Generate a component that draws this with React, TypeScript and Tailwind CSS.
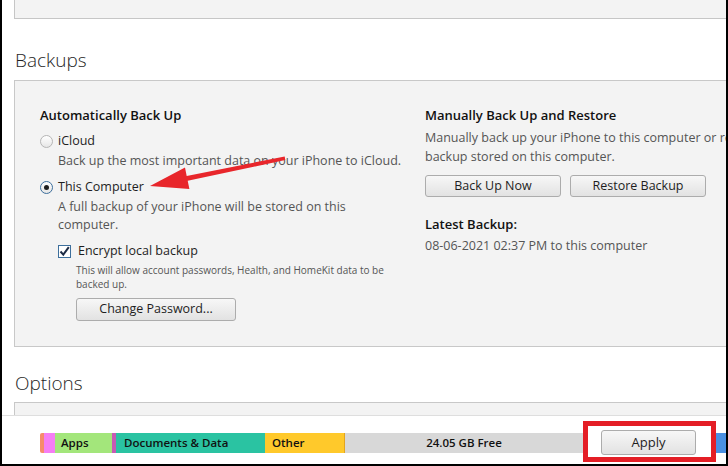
import { FunctionComponent } from "react";

const font = { fontFamily: '"Open Sans", "Noto Sans", sans-serif' };

const Button: FunctionComponent<{ label: string; className: string }> = ({ label, className }) => (
	<div
		className={
			"flex items-center justify-center rounded-[3px] border border-[#acacac] bg-gradient-to-b from-[#f7f7f7] to-[#e2e2e2] text-[12.5px] text-[#1e1e1e] " +
			className
		}
	>
		{label}
	</div>
);

const Radio: FunctionComponent<{ checked?: boolean }> = ({ checked }) => (
	<div
		className={
			"flex h-[13px] w-[13px] items-center justify-center rounded-full border bg-gradient-to-b from-[#ffffff] to-[#e6e6e6] " +
			(checked ? "border-[#3d6f9c]" : "border-[#b5b5b5]")
		}
	>
		{checked ? <div className="h-[5px] w-[5px] rounded-full bg-[#1f1f1f]" /> : null}
	</div>
);

const Checkbox: FunctionComponent = () => (
	<div className="flex h-[13px] w-[13px] items-center justify-center border border-[#3d6f9c] bg-white">
		<svg width="11" height="11" viewBox="0 0 11 11">
			<path d="M1.5 5.5 L4.3 8.6 L9.8 1.2" fill="none" stroke="#1d2b45" strokeWidth="2" />
		</svg>
	</div>
);

const App: FunctionComponent = () => {
	return (
		<div
			className="relative h-[466px] w-[728px] overflow-hidden border-b-2 border-l-2 border-r-2 border-black bg-white"
			style={font}
		>
			<div className="ml-[12px] mr-[-20px] h-[19px] border-b border-l border-[#c6c6c6] bg-[#f3f3f3]" />

			<div className="mt-[29px] pl-[13px] text-[19px] font-light leading-[24px] text-[#1f1f1f]">Backups</div>

			<div className="ml-[12px] mr-[-40px] mt-[8px] flex h-[267px] border-b border-l border-t border-[#c8c8c8] bg-[#f3f3f3]">
				<div className="w-[410px] shrink-0 pl-[25px] pt-[25px] text-[12.5px]">
					<div className="text-[13px] font-semibold leading-[18px] text-[#111]">Automatically Back Up</div>
					<div className="mt-[8px] flex h-[18px] items-center text-[#1e1e1e]">
						<Radio />
						<span className="ml-[5px]">iCloud</span>
					</div>
					<div className="ml-[18px] mt-[2px] leading-[18px] text-[#555]">
						Back up the most important data on your iPhone to iCloud.
					</div>
					<div className="mt-[8px] flex h-[18px] items-center text-[#1e1e1e]">
						<Radio checked />
						<span className="ml-[5px]">This Computer</span>
					</div>
					<div className="ml-[18px] mt-[2px] w-[310px] leading-[18px] text-[#555]">
						A full backup of your iPhone will be stored on this computer.
					</div>
					<div className="ml-[18px] mt-[8px] flex h-[18px] items-center text-[#1e1e1e]">
						<Checkbox />
						<span className="ml-[7px]">Encrypt local backup</span>
					</div>
					<div className="ml-[36px] mt-[3px] w-[320px] text-[10px] leading-[14px] text-[#555]">
						This will allow account passwords, Health, and HomeKit data to be backed up.
					</div>
					<Button label="Change Password..." className="ml-[36px] mt-[7px] h-[23px] w-[160px]" />
				</div>

				<div className="flex-1 whitespace-nowrap pt-[25px] text-[12.5px]">
					<div className="text-[13px] font-semibold leading-[18px] text-[#111]">Manually Back Up and Restore</div>
					<div className="mt-[4px] leading-[19px] text-[#555]">
						<div>Manually back up your iPhone to this computer or restore a</div>
						<div>backup stored on this computer.</div>
					</div>
					<div className="mt-[9px] flex gap-[9px]">
						<Button label="Back Up Now" className="h-[22px] w-[136px]" />
						<Button label="Restore Backup" className="h-[22px] w-[136px]" />
					</div>
					<div className="mt-[18px] text-[13px] font-semibold leading-[18px] text-[#111]">Latest Backup:</div>
					<div className="mt-[4px] leading-[18px] text-[#555]">08-06-2021 02:37 PM to this computer</div>
				</div>
			</div>

			<div className="mt-[24px] pl-[13px] text-[19px] font-light leading-[24px] text-[#1f1f1f]">Options</div>
			<div className="ml-[12px] mr-[-20px] mt-[7px] h-[13px] border-l border-t border-[#c8c8c8] bg-[#f3f3f3]" />

			<div className="flex h-[49px] border-t border-[#dedede] bg-white pl-[38px]">
				<div className="mt-[17px] flex h-[20px] text-[11.5px] font-semibold leading-[20px] text-[#111]">
					<div className="w-[4px] rounded-l-[2px] bg-[#f68b6c]" />
					<div className="w-[11px] bg-[#f57ef4]" />
					<div className="w-[57px] bg-[#a3e67b] pl-[6px]">Apps</div>
					<div className="w-[4px] bg-[#c65ab4]" />
					<div className="w-[149px] bg-[#2ac3a2] pl-[8px]">Documents &amp; Data</div>
					<div className="w-[80px] border-r border-[#e3a51e] bg-[#ffc92b] pl-[7px]">Other</div>
					<div className="w-[238px] bg-[#d8d8d8] text-center">24.05 GB Free</div>
				</div>
				<div className="mt-[5px] h-[41px] w-[133px] shrink-0 border-[5px] border-[#e41e26]">
					<Button label="Apply" className="ml-[13px] mt-[4px] h-[25px] w-[95px] text-[13px]" />
				</div>
				<div className="mt-[17px] h-[20px] w-[20px] shrink-0 bg-[#4a90e2]" />
			</div>

			<svg className="absolute left-0 top-0" width="728" height="466" viewBox="0 0 728 466">
				<polygon
					points="148,186 183,167.5 184.7,175.9 282.7,156.5 283.3,160 185.7,180.7 187.4,189.1"
					fill="#e8262b"
				/>
			</svg>
		</div>
	);
};

export default App;
